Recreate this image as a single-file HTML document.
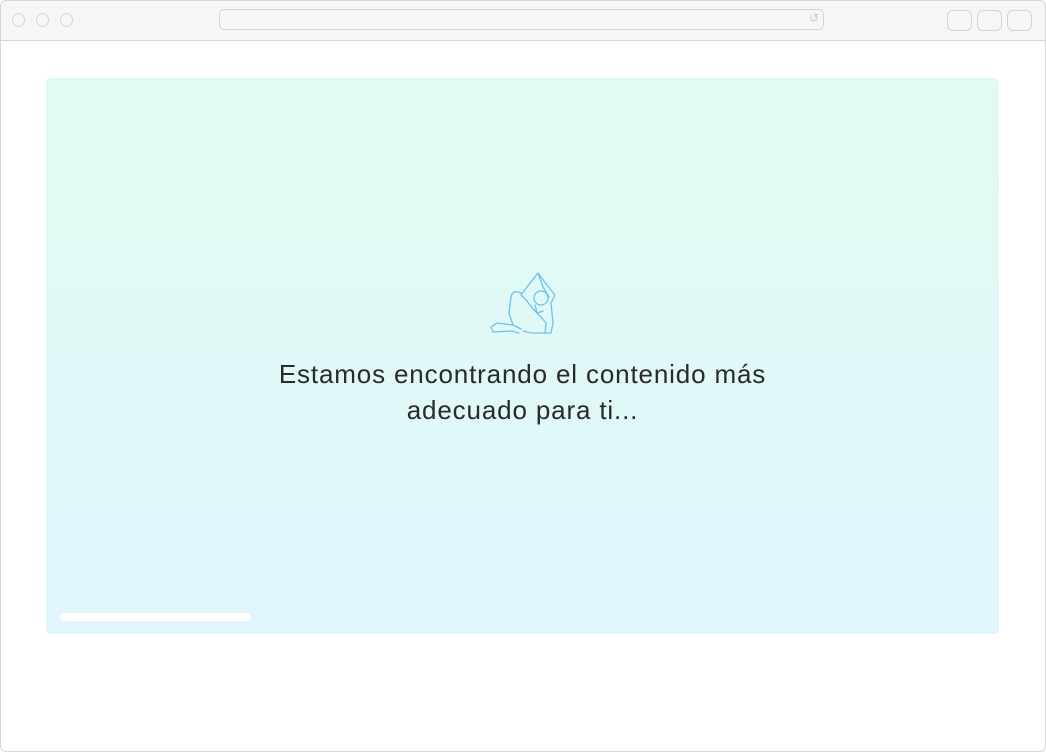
<!DOCTYPE html>
<html><head><meta charset="utf-8"><style>
html,body{margin:0;padding:0;width:1046px;height:752px;background:#fff;overflow:hidden;font-family:"Liberation Sans",sans-serif}
.win{position:absolute;left:0;top:0;width:1044px;height:750px;border:1px solid #d6d6d6;border-radius:6px;overflow:hidden;background:#fff}
.bar{position:absolute;left:0;top:0;width:100%;height:39px;background:#f6f6f6;border-bottom:1px solid #d8d8d8}
.dot{position:absolute;top:12px;width:13px;height:14px;border:1.5px solid #d4d4d4;border-radius:50%;box-sizing:border-box}
.url{position:absolute;left:218px;top:8px;width:605px;height:21px;border:1.5px solid #d4d4d4;border-radius:5px;box-sizing:border-box}
.btn{position:absolute;top:9px;width:25px;height:21px;border:1.5px solid #d4d4d4;border-radius:6px;box-sizing:border-box}
.card{position:absolute;left:45px;top:77px;width:953px;height:556px;border-radius:4px;background:linear-gradient(#e0fcf1,#e1f5fd)}
.txt{position:absolute;left:0;width:100%;top:278px;text-align:center;font-size:26px;letter-spacing:0.85px;line-height:36px;color:#2a2a2a}
.prog{position:absolute;left:14px;top:535px;width:191px;height:8px;border-radius:4px;background:#fff}
</style></head><body>
<div class="win">
<div class="bar">
<div class="dot" style="left:11px"></div><div class="dot" style="left:35px"></div><div class="dot" style="left:59px"></div>
<div class="url"><span style="position:absolute;right:4px;top:1px;font-size:12px;color:#c8c8c8">↺</span></div>
<div class="btn" style="left:946px"></div><div class="btn" style="left:976px"></div><div class="btn" style="left:1006px"></div>
</div>
<div class="card">
<svg style="position:absolute;left:444px;top:194px" width="68" height="64" viewBox="-1 -1 68 64" fill="none" stroke="#6cc3f2" stroke-width="1.3" stroke-linejoin="round" stroke-linecap="round">
<path d="M47 0 L36 14 L30 22 L36 28 M47 0 L56 12 L64 22 L60 30 L62 50 L60 60 L40 60 L32 58 M47 0 L52 14 L58 24"/>
<circle cx="50" cy="25" r="7"/>
<path d="M30 20 Q22 16 20 24 L18 40 L22 52 L6 50 L0 54 L2 59 L20 58 L28 60 M22 52 L30 56 M36 28 L42 36 L50 44 L55 50 L54 60"/>
<path d="M44 32 L46 40 L52 38"/>
</svg>
<div class="txt">Estamos encontrando el contenido más<br>adecuado para ti...</div>
<div class="prog"></div>
</div>
</div>
</body></html>
